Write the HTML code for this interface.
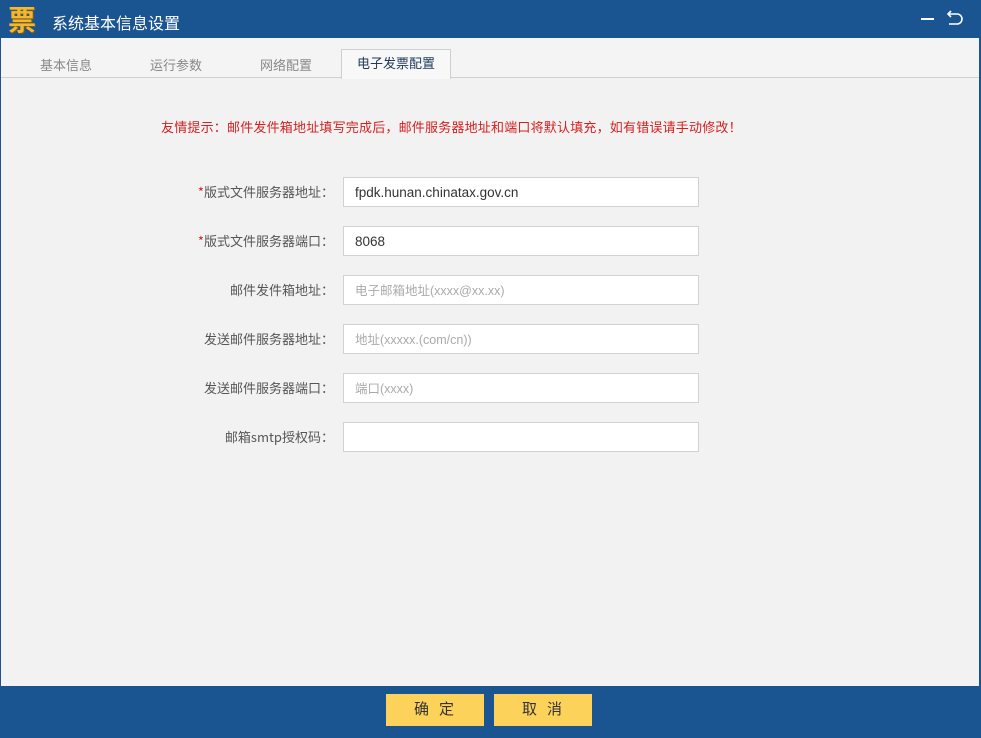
<!DOCTYPE html>
<html><head><meta charset="utf-8"><style>
*{margin:0;padding:0;box-sizing:border-box}
body{width:981px;height:738px;overflow:hidden;background:#1b5591;font-family:"Liberation Sans","Noto Sans CJK SC",sans-serif;position:relative}
.hdr{position:absolute;left:0;top:0;width:981px;height:38px;background:#1b5591}
.logo{position:absolute;left:8px;top:6px;font-size:28px;font-weight:bold;color:#f3b92e;line-height:30px;text-shadow:1px 1px 0 #8a5a10}
.title{position:absolute;left:52px;top:10px;color:#fff;font-size:16px}
.main{position:absolute;left:1px;top:38px;width:978px;height:648px;background:#f2f2f2}
.tabs{position:absolute;left:0;top:0;width:978px;height:40px;border-bottom:1px solid #d0d0d0;background:#f4f4f4}
.tab{position:absolute;top:17px;font-size:13px;color:#888}
.act{position:absolute;left:340px;top:11px;width:110px;height:30px;border:1px solid #cfcfcf;border-bottom:none;background:#f8f8f8;color:#1f3a5a;font-size:13px;text-align:center;line-height:28px}
.tip{position:absolute;left:160px;top:79px;font-size:13px;color:#d42020;letter-spacing:0.2px;font-family:"Noto Sans CJK SC",sans-serif}
.lbl{position:absolute;right:645px;font-size:13px;color:#555;text-align:right;white-space:nowrap;font-family:"Noto Sans CJK SC",sans-serif}
.lbl b{color:#d42020;font-weight:normal}
.inp{position:absolute;left:342px;width:356px;height:30px;border:1px solid #d2d2d2;background:#fff;font-size:13.5px;color:#333;padding-left:11px;line-height:30px}
.ph{color:#aaa;font-size:12.5px}
.btn{position:absolute;top:694px;width:98px;height:32px;background:#fdd25a;font-size:15px;color:#333;text-align:center;line-height:32px;letter-spacing:10px;padding-left:8px}
</style></head><body>
<div class="hdr"><div class="logo">票</div><div class="title">系统基本信息设置</div>
<div style="position:absolute;left:921px;top:18px;width:13px;height:1.5px;background:#fff"></div>
<svg style="position:absolute;left:944px;top:9px" width="20" height="20" viewBox="0 0 20 20"><path d="M4 5h9a5 5 0 0 1 0 10H5" fill="none" stroke="#fff" stroke-width="1.6"/><path d="M7 2L4 5L7 8" fill="none" stroke="#fff" stroke-width="1.6"/></svg>
</div>
<div class="main">
<div class="tabs">
<span class="tab" style="left:39px">基本信息</span>
<span class="tab" style="left:149px">运行参数</span>
<span class="tab" style="left:259px">网络配置</span>
<div class="act">电子发票配置</div>
</div>
<div class="tip">友情提示：邮件发件箱地址填写完成后，邮件服务器地址和端口将默认填充，如有错误请手动修改！</div>
<div class="lbl" style="top:144px"><b>*</b>版式文件服务器地址：</div><div class="inp" style="top:139px">fpdk.hunan.chinatax.gov.cn</div>
<div class="lbl" style="top:193px"><b>*</b>版式文件服务器端口：</div><div class="inp" style="top:188px">8068</div>
<div class="lbl" style="top:242px">邮件发件箱地址：</div><div class="inp" style="top:237px"><span class="ph">电子邮箱地址(xxxx@xx.xx)</span></div>
<div class="lbl" style="top:291px">发送邮件服务器地址：</div><div class="inp" style="top:286px"><span class="ph">地址(xxxxx.(com/cn))</span></div>
<div class="lbl" style="top:340px">发送邮件服务器端口：</div><div class="inp" style="top:335px"><span class="ph">端口(xxxx)</span></div>
<div class="lbl" style="top:389px">邮箱smtp授权码：</div><div class="inp" style="top:384px"></div>
</div>
<div class="btn" style="left:386px">确定</div>
<div class="btn" style="left:494px">取消</div>
</body></html>
